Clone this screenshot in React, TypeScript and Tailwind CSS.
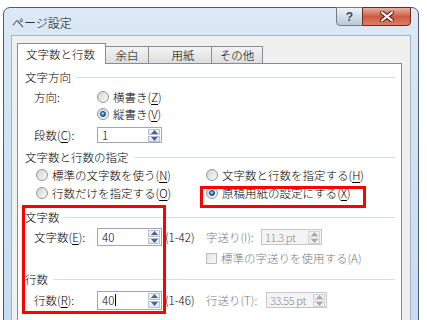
import React from "react";

const jp = "font-['Noto_Sans_CJK_JP','Noto_Sans',sans-serif]";

function Radio({ checked }: { checked?: boolean }) {
  return (
    <span className="flex h-[12px] w-[12px] shrink-0 items-center justify-center rounded-full border border-[#959696] bg-linear-to-br from-[#d2d2d2] to-[#fbfbfb]">
      {checked && (
        <span className="h-[6px] w-[6px] rounded-full border border-[#0d3f7a] bg-[radial-gradient(circle_at_40%_35%,#b6ecff,#2a8ad6_55%,#0b4d96)]" />
      )}
    </span>
  );
}

function Arrow({ up, disabled }: { up?: boolean; disabled?: boolean }) {
  return (
    <svg width="7" height="4" viewBox="0 0 7 4">
      <path d={up ? "M0 4 L3.5 0 L7 4 Z" : "M0 0 L3.5 4 L7 0 Z"} fill={disabled ? "#a9a9a9" : "#4a6290"} />
    </svg>
  );
}

function Spin({
  value,
  disabled,
  caret,
  className,
}: {
  value: string;
  disabled?: boolean;
  caret?: boolean;
  className: string;
}) {
  return (
    <div
      className={`flex shrink-0 items-stretch border ${
        disabled ? "border-[#c7c7c7] bg-[#f4f4f4] text-[#8a8a8a]" : "border-[#a3a6ad] bg-white text-black"
      } ${className}`}
    >
      <div
        className={`flex flex-1 items-center whitespace-nowrap leading-[14px] ${
          disabled ? "pl-[3px] text-[11px] tracking-[-0.4px]" : "pl-[4px]"
        }`}
      >
        {value}
        {caret && <span className="ml-px h-[12px] w-px bg-black" />}
      </div>
      <div className="m-px flex w-[12px] flex-col gap-px">
        <div
          className={`flex flex-1 items-center justify-center border ${
            disabled ? "border-[#d4d4d4] bg-[#efefef]" : "border-[#b8c2cf] bg-linear-to-b from-[#f4f7fb] to-[#dce6f1]"
          }`}
        >
          <Arrow up disabled={disabled} />
        </div>
        <div
          className={`flex flex-1 items-center justify-center border ${
            disabled ? "border-[#d4d4d4] bg-[#efefef]" : "border-[#b8c2cf] bg-linear-to-b from-[#f4f7fb] to-[#dce6f1]"
          }`}
        >
          <Arrow disabled={disabled} />
        </div>
      </div>
    </div>
  );
}

function Group({ label, mt }: { label: string; mt: string }) {
  return (
    <div className={`flex h-[16px] items-center pl-[7px] pr-[6px] ${mt}`}>
      <span className="leading-[16px]">{label}</span>
      <span className="ml-[5px] h-px flex-1 bg-[#d5dde5]" />
    </div>
  );
}

function Key({ k }: { k: string }) {
  return (
    <>
      (<span className="underline underline-offset-[2px]">{k}</span>)
    </>
  );
}

export default function App() {
  return (
    <div className={`relative h-[320px] w-[427px] overflow-hidden bg-white pl-[3px] pt-[7px] text-[11.5px] font-light text-black ${jp}`}>
      {/* window frame */}
      <div className="flex h-[340px] w-[416px] flex-col rounded-t-[7px] border border-[#4e5d6e] bg-linear-to-b from-[#dce9f6] via-[#cfe1f3] to-[#c6dcf2]">
        {/* title bar */}
        <div className="flex h-[27px] shrink-0 items-start justify-between pl-[8px] pr-[7px]">
          <span className="mt-[7px] text-[12px] leading-[16px]">ページ設定</span>
          <div className="-mt-px flex">
            <div className="flex h-[19px] w-[27px] items-center justify-center rounded-bl-[4px] border border-[#6f7d8c] bg-linear-to-b from-[#eef3f8] to-[#b9c9da] text-[12px] font-bold text-[#3c4a5c] font-['Liberation_Sans',sans-serif]">
              ?
            </div>
            <div className="-ml-px flex h-[19px] w-[49px] items-center justify-center rounded-br-[4px] border border-[#6d2a20] bg-linear-to-b from-[#eab0a2] via-[#cc5a41] to-[#dc7d66]">
              <svg width="14" height="11" viewBox="0 0 14 11">
                <path d="M2 1.5 L12 9.5 M12 1.5 L2 9.5" stroke="#5a2318" strokeWidth="4.2" strokeLinecap="round" />
                <path d="M2 1.5 L12 9.5 M12 1.5 L2 9.5" stroke="#ffffff" strokeWidth="2.2" strokeLinecap="round" />
              </svg>
            </div>
          </div>
        </div>

        {/* client area */}
        <div className="ml-[7px] mr-[7px] flex-1 border border-[#a3b3c5] bg-[#f0f0f0] pl-[5px] pt-[7px]">
          {/* tabs */}
          <div className="flex h-[20px] items-end">
            <div className="relative z-10 -mb-px flex h-[21px] w-[89px] items-center border border-b-0 border-[#898c95] bg-white pl-[8px] leading-[16px]">
              文字数と行数
            </div>
            <div className="-ml-px flex h-[17px] w-[44px] items-center justify-center border border-b-0 border-[#898c95] bg-linear-to-b from-[#f4f4f4] to-[#dedede] leading-[16px]">
              余白
            </div>
            <div className="-ml-px flex h-[17px] w-[64px] items-center justify-center border border-b-0 border-[#898c95] bg-linear-to-b from-[#f4f4f4] to-[#dedede] pl-[6px] leading-[16px]">
              用紙
            </div>
            <div className="-ml-px flex h-[17px] w-[52px] items-center justify-center border border-b-0 border-[#898c95] bg-linear-to-b from-[#f4f4f4] to-[#dedede] leading-[16px]">
              その他
            </div>
          </div>

          {/* tab page */}
          <div className="h-[300px] w-[385px] border border-[#898c95] bg-white">
            <Group label="文字方向" mt="mt-[5px]" />
            <div className="mt-[4px] flex h-[16px] items-center pl-[16px] leading-[16px]">
              <span className="w-[63px]">方向:</span>
              <Radio />
              <span className="ml-[4px]">
                横書き<Key k="Z" />
              </span>
            </div>
            <div className="mt-[1px] flex h-[16px] items-center pl-[79px] leading-[16px]">
              <Radio checked />
              <span className="ml-[4px]">
                縦書き<Key k="V" />
              </span>
            </div>
            <div className="mt-[5px] flex h-[16px] items-center pl-[16px] leading-[16px]">
              <span className="w-[63px]">
                段数<Key k="C" />:
              </span>
              <Spin value="1" className="h-[16px] w-[65px]" />
            </div>

            <Group label="文字数と行数の指定" mt="mt-[6px]" />
            <div className="mt-[2px] flex h-[16px] items-center pl-[18px] leading-[16px]">
              <div className="flex w-[170px] items-center">
                <Radio />
                <span className="ml-[4px]">
                  標準の文字数を使う<Key k="N" />
                </span>
              </div>
              <Radio />
              <span className="ml-[4px]">
                文字数と行数を指定する<Key k="H" />
              </span>
            </div>
            <div className="mt-[2px] flex h-[16px] items-center pl-[18px] leading-[16px]">
              <div className="flex w-[170px] items-center">
                <Radio />
                <span className="ml-[4px]">
                  行数だけを指定する<Key k="O" />
                </span>
              </div>
              <Radio checked />
              <span className="ml-[4px]">
                原稿用紙の設定にする<Key k="X" />
              </span>
            </div>

            <Group label="文字数" mt="mt-[8px]" />
            <div className="mt-[4px] flex h-[16px] items-center pl-[16px] leading-[16px]">
              <span className="w-[63px] shrink-0">
                文字数<Key k="E" />:
              </span>
              <Spin value="40" className="h-[18px] w-[65px]" />
              <span className="w-[44px] shrink-0 pl-[3px]">(1-42)</span>
              <span className="w-[55px] shrink-0 whitespace-nowrap text-[#7a7a7a]">字送り(I):</span>
              <Spin value="11.3 pt" disabled className="h-[16px] w-[61px]" />
            </div>
            <div className="mt-[5px] flex h-[16px] items-center pl-[188px] leading-[16px] text-[#7a7a7a]">
              <span className="h-[11px] w-[11px] shrink-0 border border-[#bdbdbd] bg-linear-to-br from-[#e6e6e6] to-[#f7f7f7]" />
              <span className="ml-[4px]">標準の字送りを使用する(A)</span>
            </div>

            <Group label="行数" mt="mt-[5px]" />
            <div className="mt-[5px] flex h-[16px] items-center pl-[16px] leading-[16px]">
              <span className="w-[63px] shrink-0">
                行数<Key k="R" />:
              </span>
              <Spin value="40" caret className="h-[19px] w-[65px]" />
              <span className="w-[44px] shrink-0 pl-[3px]">(1-46)</span>
              <span className="w-[60px] shrink-0 whitespace-nowrap text-[#7a7a7a]">行送り(T):</span>
              <Spin value="33.55 pt" disabled className="h-[16px] w-[61px]" />
            </div>
          </div>
        </div>
      </div>

      {/* red annotation boxes */}
      <div className="absolute left-[200px] top-[186px] h-[22px] w-[166px] border-[3px] border-[#ff0000]" />
      <div className="absolute left-[22px] top-[205px] h-[109px] w-[144px] border-[3px] border-[#ff0000]" />
    </div>
  );
}
